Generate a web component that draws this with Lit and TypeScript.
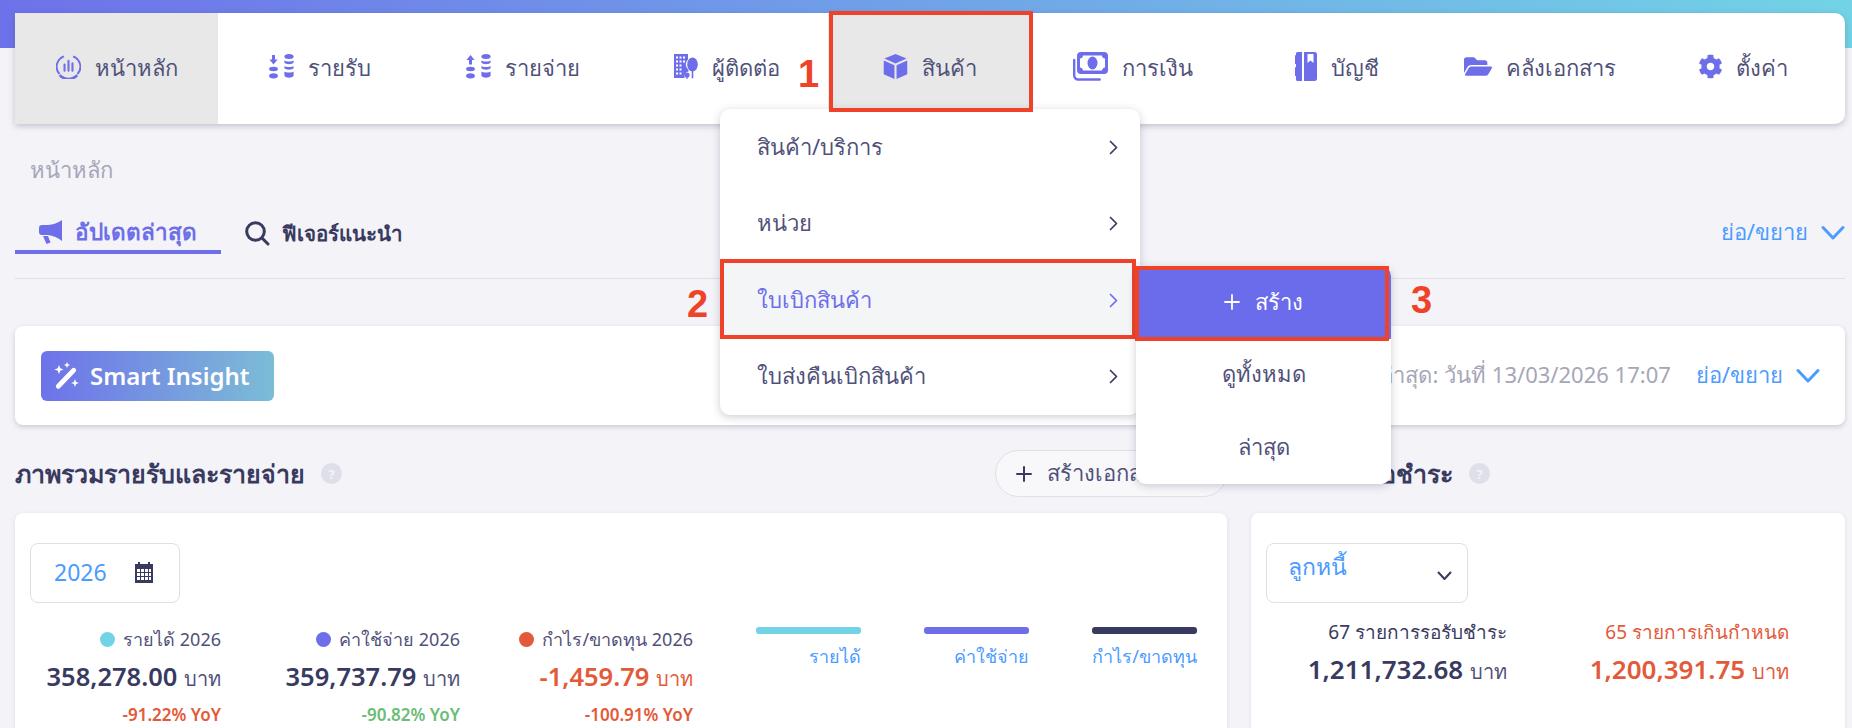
import { LitElement, css, html, svg } from "lit";
import { customElement } from "lit/decorators.js";

const PURPLE = "#6e6eea";

const icon = (w: number, h: number, vb: string, body: unknown) =>
	html`<svg class="ico" width=${w} height=${h} viewBox=${vb} fill=${PURPLE}>${body}</svg>`;

const coins = svg`
	<ellipse cx="4.5" cy="15" rx="4.4" ry="2.2"/><ellipse cx="4.5" cy="21.8" rx="4.4" ry="2.6"/>
	<ellipse cx="20" cy="2.6" rx="4.6" ry="2.5"/>
	<path d="M15.4 6.6c1.2 1.3 8 1.3 9.2 0v2.2c-1.2 1.8-8 1.8-9.2 0zM15.4 12.1c1.2 1.3 8 1.3 9.2 0v2.2c-1.2 1.8-8 1.8-9.2 0zM15.4 17.6c1.2 1.3 8 1.3 9.2 0v4.2c-1.2 2.6-8 2.6-9.2 0z"/>`;

const icons = {
	home: icon(25, 25, "0 0 24 24", svg`
		<path d="M7.6 2.2A10.6 10.6 0 0 0 3.4 19.3" fill="none" stroke=${PURPLE} stroke-width="1.8"/>
		<path d="M16.4 2.2a10.6 10.6 0 0 1 4.2 17.1" fill="none" stroke=${PURPLE} stroke-width="1.8"/>
		<path d="M3.6 20.2a11.2 11.2 0 0 0 16.8 0" fill="none" stroke=${PURPLE} stroke-width="2.6"/>
		<path d="M8.2 10v6M12 6.5v9.5M15.8 9v7" fill="none" stroke=${PURPLE} stroke-width="2" stroke-linecap="round"/>`),
	income: icon(25, 25, "0 0 25 25", svg`<path d="M3 1h3v4.5h2.6L4.5 10.4.4 5.5H3z"/>${coins}`),
	expense: icon(25, 25, "0 0 25 25", svg`<path d="M3 10.4h3V5.9h2.6L4.5 1 .4 5.9H3z"/>${coins}`),
	contact: icon(24, 25, "0 0 24 25", svg`
		<path d="M0 0h14v5.5a7 7 0 0 0-1 8.5l1.5 2v1.5a4.5 4.5 0 0 0-3.7 6.5H0z"/>
		<path d="M2 2.5h2v2H2zM5.5 2.5h2v2h-2zM9 2.5h2v2H9zM2 6.5h2v2H2zM5.5 6.5h2v2h-2zM9 6.5h2v2H9zM2 10.5h2v2H2zM5.5 10.5h2v2h-2zM2 14.5h2v2H2zM5.5 14.5h2v2h-2zM2 18.5h2v2H2zM5.5 18.5h2v2h-2z" fill="#fff"/>
		<ellipse cx="18.5" cy="10.5" rx="5.3" ry="7"/><rect x="17.7" y="14" width="1.6" height="10.5" rx=".8"/>
		<circle cx="13" cy="21" r="2.6"/><rect x="12.4" y="21" width="1.2" height="4"/>`),
	box: icon(25, 25, "0 0 24 24", svg`
		<path d="M12 0 22.6 4.4 12 9.1 1.4 4.4z"/><path d="M.7 6.2 11 10.7V24L.7 19.4z"/><path d="M23.3 6.2 13 10.7V24l10.3-4.6z"/>`),
	money: icon(35, 29, "0 0 35 29", svg`
		<path d="M8 0h23a4 4 0 0 1 4 4v14a4 4 0 0 1-4 4H8a4 4 0 0 1-4-4V4a4 4 0 0 1 4-4z"/>
		<path d="M10 3.5h19c0 2 1.5 3 3 3v9c-1.5 0-3 1.5-3 3H10c0-1.5-1.5-3-3-3v-9c1.5 0 3-1 3-3z" fill="#fff"/>
		<ellipse cx="19.5" cy="11" rx="5" ry="6.4"/>
		<path d="M1.2 8v15.5a4 4 0 0 0 4 4h21.5" fill="none" stroke=${PURPLE} stroke-width="2.4" stroke-linecap="round"/>`),
	book: icon(22, 29, "0 0 22 29", svg`
		<path d="M9 0h10.5A2.5 2.5 0 0 1 22 2.5v24a2.500 2.500 0 0 1-2.500 2.500H9z"/>
		<path d="M12.500 2h6v9l-3-2.500-3 2.500z" fill="#fff"/>
		<path d="M2.500 0H7v29H2.500A1.500 1.500 0 0 1 1 27.500V24a1.500 1.500 0 0 1-1-2.800V18a1.500 1.500 0 0 1 1-2.800V12a1.500 1.500 0 0 1-1-2.800V6a1.500 1.500 0 0 1 1-2.800V1.500A1.500 1.500 0 0 1 2.500 0z"/>`),
	folder: icon(28, 25, "0 64 576 384", svg`
		<path d="M572.694 292.093L500.27 416.248A63.997 63.997 0 0 1 444.989 448H45.025c-18.523 0-30.064-20.093-20.731-36.093l72.424-124.155A64 64 0 0 1 152 256h399.964c18.523 0 30.064 20.093 20.73 36.093zM152 224h328v-48c0-26.51-21.49-48-48-48H272l-64-64H48C21.49 64 0 85.49 0 112v278.046l69.077-118.418C86.214 242.25 117.989 224 152 224z"/>`),
	gear: icon(23, 25, "14 8 484 496", svg`
		<path d="M487.4 315.7l-42.6-24.6c4.3-23.2 4.3-47 0-70.2l42.6-24.6c4.9-2.8 7.1-8.6 5.5-14-11.1-35.6-30-67.8-54.7-94.6-3.8-4.1-10-5.1-14.8-2.3L380.8 110c-17.9-15.4-38.5-27.3-60.8-35.1V25.8c0-5.6-3.9-10.5-9.4-11.7-36.7-8.2-74.3-7.8-109.2 0-5.5 1.2-9.4 6.1-9.4 11.7V75c-22.2 7.9-42.8 19.8-60.8 35.1L88.7 85.5c-4.9-2.8-11-1.9-14.8 2.3-24.7 26.7-43.6 58.9-54.7 94.6-1.7 5.4.6 11.2 5.5 14L67.3 221c-4.3 23.2-4.3 47 0 70.2l-42.6 24.6c-4.9 2.8-7.1 8.6-5.5 14 11.1 35.6 30 67.8 54.7 94.6 3.8 4.1 10 5.1 14.8 2.3l42.6-24.6c17.9 15.4 38.5 27.3 60.8 35.1v49.2c0 5.6 3.9 10.5 9.4 11.7 36.7 8.2 74.3 7.8 109.2 0 5.5-1.2 9.4-6.1 9.4-11.7v-49.2c22.2-7.9 42.8-19.8 60.8-35.1l42.6 24.6c4.9 2.8 11 1.9 14.8-2.3 24.7-26.7 43.6-58.9 54.7-94.6 1.5-5.5-.7-11.3-5.6-14.1zM256 336c-44.1 0-80-35.9-80-80s35.9-80 80-80 80 35.9 80 80-35.9 80-80 80z"/>`),
};

const chevron = (color: string) =>
	html`<svg width="9" height="15" viewBox="0 0 9 15" fill="none" stroke=${color} stroke-width="1.7" stroke-linecap="round" stroke-linejoin="round"><path d="M1.5 1.5 7.5 7.5 1.5 13.5"/></svg>`;

const chevronDown = html`<svg width="24" height="16" viewBox="0 0 24 16" fill="none" stroke="#4c9bff" stroke-width="3" stroke-linecap="round" stroke-linejoin="round"><path d="M2 2.5 12 13 22 2.5"/></svg>`;

const plus = (color: string, size: number, sw: number) =>
	html`<svg width=${size} height=${size} viewBox="0 0 16 16" stroke=${color} stroke-width=${sw} stroke-linecap="round"><path d="M8 1v14M1 8h14"/></svg>`;

const helpDot = html`<span class="help">?</span>`;

const NAV = [
	{ label: "หน้าหลัก", icon: icons.home, active: true },
	{ label: "รายรับ", icon: icons.income },
	{ label: "รายจ่าย", icon: icons.expense },
	{ label: "ผู้ติดต่อ", icon: icons.contact },
	{ label: "สินค้า", icon: icons.box, active: true, marked: true },
	{ label: "การเงิน", icon: icons.money },
	{ label: "บัญชี", icon: icons.book },
	{ label: "คลังเอกสาร", icon: icons.folder },
	{ label: "ตั้งค่า", icon: icons.gear },
];

const STATS = [
	{ dot: "#72d3e6", label: "รายได้ 2026", value: "358,278.00", yoy: "-91.22% YoY", yoyClass: "red" },
	{ dot: "#6e6eea", label: "ค่าใช้จ่าย 2026", value: "359,737.79", yoy: "-90.82% YoY", yoyClass: "green" },
	{ dot: "#e35a3a", label: "กำไร/ขาดทุน 2026", value: "-1,459.79", yoy: "-100.91% YoY", yoyClass: "red", valueClass: "red" },
];

const LEGEND = [
	{ color: "#72d3e6", label: "รายได้" },
	{ color: "#6e6eea", label: "ค่าใช้จ่าย" },
	{ color: "#393a5f", label: "กำไร/ขาดทุน" },
];

const MENU = ["สินค้า/บริการ", "หน่วย", "ใบเบิกสินค้า", "ใบส่งคืนเบิกสินค้า"];

@customElement("app-root")
export class AppRoot extends LitElement {
	static styles = css`
		:host {
			display: block;
			position: relative;
			height: 728px;
			overflow: hidden;
			background: #f3f3f8;
			color: #393a5f;
			font-family: "Noto Sans", sans-serif;
			font-size: 22px;
		}
		svg { display: block; flex: none; }

		.top {
			padding: 13px 7px 0 15px;
			background: linear-gradient(90deg, #6e72ea, #72d3e6) top / 100% 48px no-repeat;
		}
		.nav {
			display: grid;
			grid-template-columns: repeat(9, 1fr);
			height: 111px;
			background: #fff;
			border-radius: 0 10px 10px 0;
			box-shadow: 0 2px 6px rgba(60, 60, 90, 0.28);
		}
		.nav-item {
			position: relative;
			display: flex;
			align-items: center;
			justify-content: center;
			gap: 14px;
			color: #50517a;
		}
		.nav-item .ico { margin-top: -5px; }
		.nav-item.active { background: #e8e8e8; }
		.nav-item.marked::after {
			content: "";
			position: absolute;
			inset: -2px -1px 12px 1px;
			border: 4px solid #ee4328;
			z-index: 2;
		}

		.content { padding: 0 7px 0 15px; }
		.crumb {
			padding: 28px 0 0 15px;
			height: 34px;
			line-height: 34px;
			color: #a6a6b8;
		}
		.tabs-row {
			display: flex;
			align-items: flex-end;
			justify-content: space-between;
			box-sizing: border-box;
			height: 62px;
			margin-top: 31px;
			padding-bottom: 24px;
			border-bottom: 1px solid #dfdfe6;
		}
		.tabs { display: flex; }
		.tab {
			display: flex;
			align-items: center;
			gap: 12px;
			box-sizing: border-box;
			height: 37px;
			padding: 0 24px 4px 24px;
			font-size: 20.5px;
			font-weight: 600;
		}
		.tab.on {
			color: #6e6eea;
			border-bottom: 4px solid #6e6eea;
			font-size: 22.5px;
		}
		.toggle {
			display: flex;
			align-items: center;
			gap: 13px;
			color: #4c9bff;
		}
		.tabs-row .toggle { padding-bottom: 4px; }

		.insight {
			display: flex;
			align-items: center;
			justify-content: space-between;
			height: 99px;
			margin-top: 47px;
			padding: 0 25px 0 26px;
			background: #fff;
			border-radius: 8px;
			box-shadow: 0 2px 5px rgba(60, 60, 90, 0.22);
		}
		.badge {
			display: flex;
			align-items: center;
			gap: 11px;
			box-sizing: border-box;
			width: 233px;
			height: 50px;
			padding-left: 12px;
			border-radius: 6px;
			background: linear-gradient(90deg, #6e72ea, #7cbcd6);
			color: #fff;
			font-size: 24px;
			font-weight: 600;
		}
		.insight-right { display: flex; align-items: center; gap: 25px; }
		.updated { color: #a6a6b8; }

		.sections {
			display: grid;
			grid-template-columns: 1212px 594px;
			column-gap: 24px;
			margin-top: 25px;
		}
		.sec-head {
			display: flex;
			align-items: center;
			height: 47px;
			margin-bottom: 16px;
		}
		.sec-head h2 {
			margin: 0;
			font-size: 25px;
			font-weight: 700;
			white-space: nowrap;
		}
		.help {
			display: inline-flex;
			align-items: center;
			justify-content: center;
			width: 21px;
			height: 21px;
			margin-left: 16px;
			border-radius: 50%;
			background: #dfdfe9;
			color: #f3f3f8;
			font-size: 13px;
			font-weight: 700;
		}
		.create-doc {
			display: flex;
			align-items: center;
			gap: 15px;
			box-sizing: border-box;
			width: 232px;
			height: 47px;
			margin-left: auto;
			padding-left: 20px;
			border: 1px solid #dfdfe9;
			border-radius: 24px;
			background: #f8f8fb;
			color: #50517a;
			white-space: nowrap;
		}
		.card {
			height: 240px;
			padding: 30px 15px 0;
			background: #fff;
			border-radius: 8px;
			box-shadow: 0 1px 4px rgba(60, 60, 90, 0.12);
		}
		.field {
			display: flex;
			box-sizing: border-box;
			height: 60px;
			border: 1px solid #dfdfe9;
			border-radius: 8px;
			color: #4c9bff;
			font-size: 23px;
		}
		.year {
			width: 150px;
			align-items: center;
			gap: 28px;
			padding: 0 0 2px 23px;
		}
		.select {
			width: 202px;
			justify-content: space-between;
			padding: 5px 15px 0 21px;
		}
		.select svg { margin-top: 22px; }

		.overview {
			display: grid;
			grid-template-columns: 191px 239px 233px auto;
			margin-top: 24px;
		}
		.overview .stat { margin-top: -2px; }
		.overview .amount { font-size: 25.5px; }
		.stat { display: flex; flex-direction: column; align-items: flex-end; }
		.stat-label {
			display: flex;
			align-items: center;
			gap: 8px;
			height: 28px;
			color: #50517a;
			font-size: 18px;
			white-space: nowrap;
		}
		.dot { width: 15px; height: 15px; border-radius: 50%; }
		.amount {
			height: 44px;
			line-height: 44px;
			margin-top: 1px;
			font-size: 26px;
			font-weight: 600;
			white-space: nowrap;
		}
		.amount small { font-size: 20px; font-weight: 400; color: #50517a; }
		.yoy {
			height: 28px;
			margin-top: 3px;
			line-height: 28px;
			font-size: 17px;
			font-weight: 600;
			white-space: nowrap;
		}
		.red { color: #e35a3a; }
		.amount.red small { color: #e35a3a; }
		.green { color: #6bbd78; }

		.legends {
			display: grid;
			grid-template-columns: repeat(3, 105px);
			column-gap: 63px;
			margin-left: 63px;
		}
		.legend {
			display: flex;
			flex-direction: column;
			align-items: flex-end;
			color: #4c9bff;
			font-size: 18px;
			white-space: nowrap;
		}
		.legend i { display: block; width: 100%; height: 7px; margin-bottom: 8px; border-radius: 3px; }

		.pending {
			display: grid;
			grid-template-columns: 256px 282px;
			margin: 15px 0 0 -15px;
		}
		.pending .stat-label { font-size: 19px; color: #393a5f; }
		.pending .stat-label.red { color: #e35a3a; }

		.menu {
			position: absolute;
			left: 720px;
			top: 109px;
			width: 420px;
			background: #fff;
			border-radius: 10px;
			box-shadow: 0 2px 8px rgba(60, 60, 90, 0.25);
			z-index: 1;
		}
		.menu-row {
			position: relative;
			display: flex;
			align-items: center;
			justify-content: space-between;
			height: 76.5px;
			padding: 0 22px 0 37px;
			color: #50517a;
		}
		.menu-row.on { background: #f4f5f7; color: #6e6eea; }
		.menu-row.on::after {
			content: "";
			position: absolute;
			inset: -3px 4px 0 0;
			border: 4px solid #ee4328;
		}
		.sub {
			position: absolute;
			left: 1136px;
			top: 266px;
			width: 255px;
			background: #fff;
			border-radius: 10px;
			box-shadow: 0 2px 8px rgba(60, 60, 90, 0.25);
			z-index: 1;
		}
		.sub-row {
			position: relative;
			display: flex;
			align-items: center;
			justify-content: center;
			gap: 15px;
			height: 72.5px;
			color: #50517a;
		}
		.sub-row.on { background: #6b6ceb; color: #fff; border-radius: 10px 10px 0 0; }
		.sub-row.on::after {
			content: "";
			position: absolute;
			inset: 0 2px -2px -1px;
			border: 4px solid #ee4328;
		}

		.mark {
			position: absolute;
			color: #ee4328;
			font-family: "Liberation Sans", sans-serif;
			font-size: 38px;
			font-weight: 700;
			line-height: 38px;
			z-index: 3;
		}
	`;

	render() {
		return html`
			<div class="top">
				<nav class="nav">
					${NAV.map(
						(n) => html`<div class="nav-item ${n.active ? "active" : ""} ${n.marked ? "marked" : ""}">${n.icon}<span>${n.label}</span></div>`,
					)}
				</nav>
			</div>

			<main class="content">
				<div class="crumb">หน้าหลัก</div>
				<div class="tabs-row">
					<div class="tabs">
						<div class="tab on">
							<svg width="24" height="25" viewBox="0 0 24 25" fill=${PURPLE}>
								<path d="M23 1v21c-4-3.5-9-5.5-14-6H3a3 3 0 0 1-3-3V9a3 3 0 0 1 3-3h6c5-.5 10-2 14-5z"/>
								<path d="M4 17h5l2.5 6.5-4 1.5z"/>
							</svg>
							อัปเดตล่าสุด
						</div>
						<div class="tab">
							<svg width="25" height="25" viewBox="0 0 25 25" fill="none" stroke="#393a5f" stroke-width="3" stroke-linecap="round"><circle cx="10.5" cy="10.5" r="8.8"/><path d="M17 17l6 6"/></svg>
							ฟีเจอร์แนะนำ
						</div>
					</div>
					<div class="toggle">ย่อ/ขยาย ${chevronDown}</div>
				</div>

				<section class="insight">
					<div class="badge">
						<svg width="26" height="28" viewBox="0 0 26 28" fill="#fff">
							<path d="M19 6.5a2.4 2.4 0 0 1 3.4 3.4L7 26a2.4 2.4 0 0 1-3.4-3.4z"/>
							<path d="M6 3l1.3 3.2L10.500 7.500 7.300 8.800 6 12 4.700 8.800 1.500 7.500 4.700 6.200zM14 0l.9 2.100L17 3l-2.100.9L14 6l-.9-2.100L11 3l2.100-.9zM22 17l1.100 2.900L26 21l-2.900 1.100L22 25l-1.100-2.900L18 21l2.900-1.100z"/>
						</svg>
						Smart Insight
					</div>
					<div class="insight-right">
						<span class="updated">อัปเดตล่าสุด: วันที่ 13/03/2026 17:07</span>
						<div class="toggle">ย่อ/ขยาย ${chevronDown}</div>
					</div>
				</section>

				<div class="sections">
					<section>
						<div class="sec-head">
							<h2>ภาพรวมรายรับและรายจ่าย</h2>
							${helpDot}
							<div class="create-doc">${plus("#393a5f", 16, 2)} สร้างเอกสาร</div>
						</div>
						<div class="card">
							<div class="field year">
								2026
								<svg width="18" height="21" viewBox="0 0 18 21" fill="#393a5f">
									<path d="M3 0h2v2H3zM13 0h2v2h-2zM0 2h18v19H0z"/>
									<path d="M2 7h3v3H2zM6 7h3v3H6zM10 7h3v3h-3zM14 7h2v3h-2zM2 11h3v3H2zM6 11h3v3H6zM10 11h3v3h-3zM14 11h2v3h-2zM2 15h3v3H2zM6 15h3v3H6zM10 15h3v3h-3zM14 15h2v3h-2z" fill="#fff"/>
								</svg>
							</div>
							<div class="overview">
								${STATS.map(
									(s) => html`<div class="stat">
										<div class="stat-label"><span class="dot" style="background:${s.dot}"></span>${s.label}</div>
										<div class="amount ${s.valueClass ?? ""}">${s.value} <small>บาท</small></div>
										<div class="yoy ${s.yoyClass}">${s.yoy}</div>
									</div>`,
								)}
								<div class="legends">
									${LEGEND.map(
										(l) => html`<div class="legend"><i style="background:${l.color}"></i>${l.label}</div>`,
									)}
								</div>
							</div>
						</div>
					</section>

					<section>
						<div class="sec-head">
							<h2>รายการหนี้รอชำระ</h2>
							${helpDot}
						</div>
						<div class="card">
							<div class="field select">
								ลูกหนี้
								<svg width="15" height="10" viewBox="0 0 15 10" fill="none" stroke="#393a5f" stroke-width="2" stroke-linecap="round" stroke-linejoin="round"><path d="M1.5 1.5 7.5 8 13.5 1.5"/></svg>
							</div>
							<div class="pending">
								<div class="stat">
									<div class="stat-label">67 รายการรอรับชำระ</div>
									<div class="amount">1,211,732.68 <small>บาท</small></div>
								</div>
								<div class="stat">
									<div class="stat-label red">65 รายการเกินกำหนด</div>
									<div class="amount red">1,200,391.75 <small>บาท</small></div>
								</div>
							</div>
						</div>
					</section>
				</div>
			</main>

			<div class="menu">
				${MENU.map(
					(m, i) => html`<div class="menu-row ${i === 2 ? "on" : ""}">${m} ${chevron(i === 2 ? PURPLE : "#393a5f")}</div>`,
				)}
			</div>
			<div class="sub">
				<div class="sub-row on">${plus("#fff", 16, 1.8)} สร้าง</div>
				<div class="sub-row">ดูทั้งหมด</div>
				<div class="sub-row">ล่าสุด</div>
			</div>

			<span class="mark" style="left:798px;top:55px">1</span>
			<span class="mark" style="left:687px;top:285px">2</span>
			<span class="mark" style="left:1411px;top:281px">3</span>
		`;
	}
}
